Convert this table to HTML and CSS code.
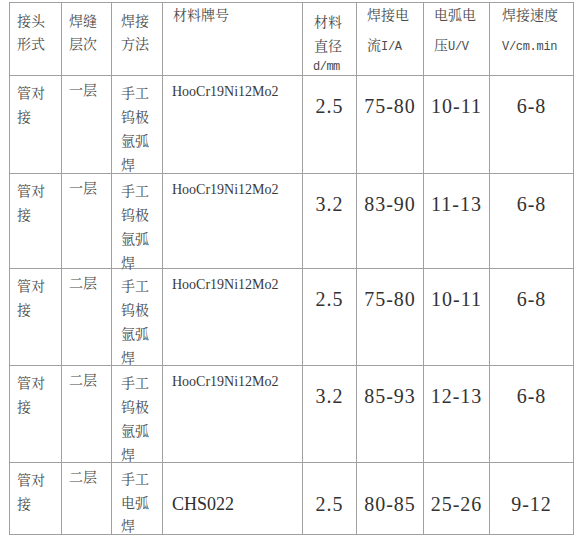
FILE: index.html
```html
<!DOCTYPE html>
<html lang="zh-CN">
<head>
<meta charset="utf-8">
<title>焊接工艺参数</title>
<link rel="stylesheet" href="styles.css">
</head>
<body>
<table class="weld">
  <colgroup>
    <col class="c1"><col class="c2"><col class="c3"><col class="c4">
    <col class="c5"><col class="c6"><col class="c7"><col class="c8">
  </colgroup>
  <thead>
    <tr class="head">
      <th class="h-std">接头<br>形式</th>
      <th class="h-std">焊缝<br>层次</th>
      <th class="h-std">焊接<br>方法</th>
      <th class="h-top">材料牌号</th>
      <th class="h-dia"><div class="fit">材料<br>直径<span class="lat-b">d/mm</span></div></th>
      <th class="h-wide"><div class="shift">焊接电<br>流<span class="lat-s">I/A</span></div></th>
      <th class="h-wide"><div class="shift">电弧电<br>压<span class="lat-s">U/V</span></div></th>
      <th class="h-wide h-last"><div class="shift">焊接速度<br><span class="lat-s">V/cm.min</span></div></th>
    </tr>
  </thead>
  <tbody>
    <tr class="r-a">
      <td class="t-joint">管对<br>接</td>
      <td class="t-layer">一层</td>
      <td class="t-method"><div class="fit">手工<br>钨极<br>氩弧<br>焊</div></td>
      <td class="t-mat">HooCr19Ni12Mo2</td>
      <td class="num">2.5</td>
      <td class="num">75-80</td>
      <td class="num">10-11</td>
      <td class="num">6-8</td>
    </tr>
    <tr class="r-b">
      <td class="t-joint">管对<br>接</td>
      <td class="t-layer">一层</td>
      <td class="t-method"><div class="fit">手工<br>钨极<br>氩弧<br>焊</div></td>
      <td class="t-mat">HooCr19Ni12Mo2</td>
      <td class="num">3.2</td>
      <td class="num">83-90</td>
      <td class="num">11-13</td>
      <td class="num">6-8</td>
    </tr>
    <tr class="r-c">
      <td class="t-joint">管对<br>接</td>
      <td class="t-layer">二层</td>
      <td class="t-method"><div class="fit">手工<br>钨极<br>氩弧<br>焊</div></td>
      <td class="t-mat">HooCr19Ni12Mo2</td>
      <td class="num">2.5</td>
      <td class="num">75-80</td>
      <td class="num">10-11</td>
      <td class="num">6-8</td>
    </tr>
    <tr class="r-d">
      <td class="t-joint">管对<br>接</td>
      <td class="t-layer">二层</td>
      <td class="t-method"><div class="fit">手工<br>钨极<br>氩弧<br>焊</div></td>
      <td class="t-mat">HooCr19Ni12Mo2</td>
      <td class="num">3.2</td>
      <td class="num">85-93</td>
      <td class="num">12-13</td>
      <td class="num">6-8</td>
    </tr>
    <tr class="r-e">
      <td class="t-joint">管对<br>接</td>
      <td class="t-layer">二层</td>
      <td class="t-method t-short"><div class="fit">手工<br>电弧<br>焊</div></td>
      <td class="t-mat t-big">CHS022</td>
      <td class="num num-low">2.5</td>
      <td class="num num-low">80-85</td>
      <td class="num num-low">25-26</td>
      <td class="num num-low">9-12</td>
    </tr>
  </tbody>
</table>
</body>
</html>
```

FILE: styles.css
```css
html, body {
  margin: 0;
  padding: 0;
  background: #ffffff;
}

body {
  padding: 2px 0 0 9px;
  font-family: "Noto Serif CJK SC", "Liberation Serif", "Noto Sans CJK SC", serif;
  color: #4a4a4a;
}

.weld {
  border-collapse: collapse;
  table-layout: fixed;
  width: 564px;
}

.c1 { width: 52px; }
.c2 { width: 50px; }
.c3 { width: 51px; }
.c4 { width: 140px; }
.c5 { width: 54px; }
.c6 { width: 67px; }
.c7 { width: 66px; }
.c8 { width: 84px; }

.weld th,
.weld td {
  border: 1px solid #a0a0a0;
  vertical-align: top;
  text-align: left;
  font-weight: normal;
  font-size: 14px;
  line-height: 24px;
  padding: 0 0 0 7px;
  white-space: nowrap;
}

.head { height: 73px; }
.r-a { height: 98px; }
.r-b { height: 95px; }
.r-c { height: 97px; }
.r-d { height: 97px; }
.r-e { height: 72px; }

/* lets the text run to the cell edge without stretching the row */
.fit {
  margin-bottom: -14px;
}

/* header cells */
.weld .h-std {
  padding-top: 6px;
  line-height: 23px;
}
.weld .h-std:nth-child(3) { padding-left: 9px; }
.weld .h-top {
  padding-top: 0;
  line-height: 23px;
  padding-left: 10px;
}
.weld .h-dia {
  padding-top: 6px;
  padding-left: 11px;
  line-height: 24px;
}
.weld .h-wide {
  padding-left: 10px;
}
.weld .h-last {
  padding-left: 12px;
}
.shift {
  line-height: 30px;
  margin-top: -4px;
}

.lat-s {
  font-family: "Liberation Mono", monospace;
  font-size: 12px;
  letter-spacing: -0.3px;
}
.lat-b {
  display: block;
  font-family: "Liberation Mono", monospace;
  font-size: 12px;
  line-height: 20px;
  letter-spacing: -0.5px;
  margin-left: -1px;
}

/* body cells */
.weld .t-joint {
  padding-top: 4px;
}
.weld .t-layer {
  padding-top: 1px;
}
.weld .t-method {
  padding-top: 4px;
  padding-left: 9px;
  line-height: 24px;
}
.weld .t-short {
  padding-top: 4px;
  line-height: 23.5px;
}
.weld .t-mat {
  padding-top: 4px;
  padding-left: 9px;
  font-family: "Liberation Serif", serif;
  font-size: 14px;
  color: #3a3a3a;
}
.weld .t-big {
  padding-top: 29px;
  font-size: 18px;
  color: #2e2e2e;
}
.weld .num {
  padding: 18px 0 0 0;
  text-align: center;
  font-family: "Liberation Serif", serif;
  font-size: 20px;
  letter-spacing: 1px;
  color: #333333;
}
.weld .num-low {
  padding-top: 29px;
}
```
